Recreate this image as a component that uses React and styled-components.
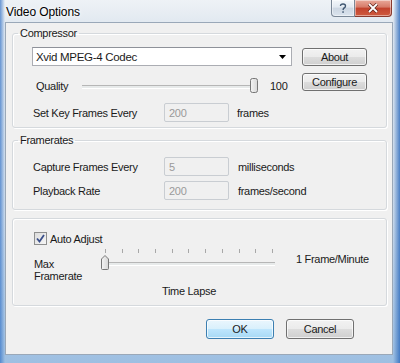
import React from "react";
import styled, { createGlobalStyle } from "styled-components";

const GlobalStyle = createGlobalStyle`
  html, body {
    margin: 0;
    padding: 0;
    width: 400px;
    height: 363px;
    overflow: hidden;
  }
`;

// Window frame
const Window = styled.div`
  width: 400px;
  height: 363px;
  display: flex;
  flex-direction: column;
  font-family: "Liberation Sans", Arial, sans-serif;
  font-size: 11px;
  letter-spacing: -0.3px;
  color: #1a1a1a;
  background:
    linear-gradient(90deg, rgba(60, 120, 200, 0.75) 0, rgba(60, 120, 200, 0) 5px, rgba(60, 120, 200, 0) 393px, rgba(50, 110, 190, 0.85) 400px),
    linear-gradient(180deg, #eef2f6 0, #e3eaf1 20px, #cddcec 60%, #9dbfe2 100%);
`;

const TitleBar = styled.div`
  height: 22px;
  display: flex;
  align-items: flex-start;
  padding-left: 6px;
`;

const Title = styled.div`
  font-size: 12px;
  letter-spacing: -0.1px;
  line-height: 14px;
  padding-top: 5px;
  color: #000;
  text-shadow: 0 0 6px #fff, 0 0 3px #fff;
`;

const CaptionButtons = styled.div`
  margin-left: auto;
  margin-right: 8px;
  display: flex;
`;

const CaptionButton = styled.div`
  width: ${(p) => (p.$close ? 37 : 24)}px;
  height: 17px;
  box-sizing: border-box;
  display: flex;
  align-items: center;
  justify-content: center;
  border: 1px solid ${(p) => (p.$close ? "#8a3a2e" : "#7a8796")};
  border-top: none;
  border-left: ${(p) => (p.$close ? "none" : "1px solid #7a8796")};
  border-radius: ${(p) => (p.$close ? "0 0 4px 0" : "0 0 0 4px")};
  background: ${(p) =>
    p.$close
      ? "linear-gradient(180deg, #e9a99a 0%, #d67a68 45%, #c2422d 50%, #cf5a3e 100%)"
      : "linear-gradient(180deg, #f4f7fa 0%, #e2e9f1 45%, #ccd6e2 50%, #dbe4ee 100%)"};
  box-shadow: inset 0 0 0 1px rgba(255, 255, 255, 0.45);
`;

const Client = styled.div`
  flex: 1;
  margin: 0 7px 8px 5px;
  background: #f0f0f0;
  border: 1px solid #9aa8b8;
  padding: 4px 5px 0 6px;
  display: flex;
  flex-direction: column;
`;

// Group boxes
const Group = styled.fieldset`
  margin: ${(p) => p.$top || 0}px 0 0 0;
  padding: 0;
  border: 1px solid #d5d9dd;
  border-radius: 3px;
  box-shadow: inset 1px 1px 0 #fff, 1px 1px 0 #fff;
  min-width: 0;
`;

const Legend = styled.legend`
  margin-left: 5px;
  padding: 0 2px;
  line-height: 13px;
  font-size: 11px;
`;

const GroupBody = styled.div`
  padding: ${(p) => p.$pad};
`;

// Common controls
const Row = styled.div`
  display: flex;
  align-items: center;
  height: ${(p) => p.$h || 19}px;
  margin-top: ${(p) => p.$mt || 0}px;
`;

const Label = styled.span`
  width: ${(p) => p.$w}px;
  margin-left: ${(p) => p.$ml || 0}px;
  flex-shrink: 0;
`;

const Unit = styled.span`
  margin-left: ${(p) => p.$ml || 8}px;
`;

const TextBox = styled.div`
  width: 65px;
  height: 19px;
  box-sizing: border-box;
  border: 1px solid #c9cdd2;
  border-radius: 2px;
  background: #f0f0f0;
  color: #9a9a9a;
  padding: 2px 0 0 4px;
  line-height: 14px;
`;

const Select = styled.div`
  width: 260px;
  height: 19px;
  box-sizing: border-box;
  border: 1px solid #abadb3;
  border-top-color: #8e9199;
  background: #fff;
  display: flex;
  align-items: center;
  padding: 0 5px 0 3px;
  font-size: 11.5px;
  letter-spacing: -0.3px;
`;

const SelectText = styled.span`
  flex: 1;
`;

const Button = styled.div`
  width: ${(p) => p.$w || 65}px;
  height: ${(p) => p.$h || 18}px;
  box-sizing: border-box;
  border: 1px solid ${(p) => (p.$focus ? "#3c7fb1" : "#707070")};
  border-radius: 3px;
  display: flex;
  align-items: center;
  justify-content: center;
  background: ${(p) =>
    p.$focus
      ? "linear-gradient(180deg, #eaf6fd 0%, #d9f0fc 49%, #bee6fd 50%, #a7d9f5 100%)"
      : "linear-gradient(180deg, #f2f2f2 0%, #ebebeb 49%, #dddddd 50%, #cfcfcf 100%)"};
  box-shadow: inset 0 0 0 1px rgba(255, 255, 255, 0.7);
`;

// Compressor layout
const Columns = styled.div`
  display: flex;
  align-items: flex-start;
`;

const LeftCol = styled.div`
  width: 260px;
  display: flex;
  flex-direction: column;
`;

const RightCol = styled.div`
  margin-left: 10px;
  margin-top: 1px;
  display: flex;
  flex-direction: column;
  gap: 7px;
`;

// Sliders
const Track = styled.div`
  position: relative;
  width: ${(p) => p.$w}px;
  height: 18px;
  flex-shrink: 0;
  margin-left: ${(p) => p.$ml || 0}px;
  &::before {
    content: "";
    position: absolute;
    left: 0;
    right: 0;
    top: 8px;
    height: 2px;
    background: #e7eaea;
    border-top: 1px solid #b6b6b6;
    border-bottom: 1px solid #fff;
  }
`;

const Thumb = styled.div`
  position: absolute;
  top: 0;
  line-height: 0;
`;

const Value = styled.span`
  margin-left: 12px;
`;

const Ticks = styled.div`
  height: 5px;
  margin: 0 5px;
  display: flex;
  justify-content: space-between;
`;

const Tick = styled.span`
  width: 1px;
  height: 4px;
  background: #a8a8a8;
`;

const CheckRow = styled.div`
  display: flex;
  align-items: center;
  height: 13px;
`;

const CheckBox = styled.div`
  width: 13px;
  height: 13px;
  box-sizing: border-box;
  border: 1px solid #8e8f8f;
  background: linear-gradient(135deg, #dcdcdc 0%, #f6f6f6 100%);
  display: flex;
  align-items: center;
  justify-content: center;
  margin-right: 3px;
`;

const SliderRow = styled.div`
  display: flex;
  align-items: flex-start;
  margin-top: 4px;
`;

const SideLabel = styled.div`
  width: 66px;
  line-height: 12px;
  margin-top: 9px;
`;

const SliderCol = styled.div`
  width: 178px;
  display: flex;
  flex-direction: column;
`;

const Caption = styled.div`
  text-align: center;
  line-height: 13px;
  margin-top: 13px;
`;

const RightLabel = styled.div`
  margin-left: 18px;
  margin-top: 4px;
  line-height: 13px;
`;

const Footer = styled.div`
  display: flex;
  justify-content: flex-end;
  gap: 12px;
  margin-top: 13px;
  padding-right: 33px;
`;

const ThumbShape = ({ pointed }) => (
  <svg width="10" height="17" viewBox="0 0 10 17">
    <defs>
      <linearGradient id={pointed ? "tg2" : "tg1"} x1="0" x2="1" y1="0" y2="0">
        <stop offset="0" stopColor="#f4f4f4" />
        <stop offset="1" stopColor="#d6d6d6" />
      </linearGradient>
    </defs>
    {pointed ? (
      <path d="M1.5 5 L5 1.5 L8.5 5 L8.5 14.5 Q8.5 15.5 7.5 15.5 L2.5 15.5 Q1.5 15.5 1.5 14.5 Z" fill="url(#tg2)" stroke="#777" />
    ) : (
      <rect x="1.5" y="1.5" width="7" height="14" rx="2" fill="url(#tg1)" stroke="#777" />
    )}
  </svg>
);

const App = () => {
  const ticks = Array.from({ length: 11 });
  return (
    <>
      <GlobalStyle />
      <Window>
        <TitleBar>
          <Title>Video Options</Title>
          <CaptionButtons>
            <CaptionButton>
              <svg width="8" height="11" viewBox="0 0 8 11">
                <path d="M1.5 3 Q1.5 1 4 1 Q6.5 1 6.5 3 Q6.5 4.5 4.5 5.5 L4 7" fill="none" stroke="#3f5670" strokeWidth="1.4" />
                <rect x="3.3" y="8.3" width="1.5" height="1.5" fill="#3f5670" />
              </svg>
            </CaptionButton>
            <CaptionButton $close>
              <svg width="12" height="10" viewBox="0 0 12 10">
                <path d="M2 1 L10 9 M10 1 L2 9" stroke="#5a2018" strokeWidth="3.2" />
                <path d="M2 1 L10 9 M10 1 L2 9" stroke="#fff" strokeWidth="1.8" />
              </svg>
            </CaptionButton>
          </CaptionButtons>
        </TitleBar>

        <Client>
          <Group>
            <Legend>Compressor</Legend>
            <GroupBody $pad="7px 0 5px 19px">
              <Columns>
                <LeftCol>
                  <Select>
                    <SelectText>Xvid MPEG-4 Codec</SelectText>
                    <svg width="7" height="4" viewBox="0 0 7 4">
                      <path d="M0 0 L7 0 L3.5 4 Z" fill="#000" />
                    </svg>
                  </Select>
                  <Row $h={18} $mt={11}>
                    <Label $w={46} $ml={4}>Quality</Label>
                    <Track $w={176}>
                      <Thumb style={{ left: 167 }}>
                        <ThumbShape />
                      </Thumb>
                    </Track>
                    <Value>100</Value>
                  </Row>
                  <Row $mt={8}>
                    <Label $w={131} $ml={1}>Set Key Frames Every</Label>
                    <TextBox>200</TextBox>
                    <Unit>frames</Unit>
                  </Row>
                </LeftCol>
                <RightCol>
                  <Button>About</Button>
                  <Button>Configure</Button>
                </RightCol>
              </Columns>
            </GroupBody>
          </Group>

          <Group $top={6}>
            <Legend>Framerates</Legend>
            <GroupBody $pad="10px 0 9px 20px">
              <Row>
                <Label $w={131}>Capture Frames Every</Label>
                <TextBox>5</TextBox>
                <Unit $ml={9}>milliseconds</Unit>
              </Row>
              <Row $mt={5}>
                <Label $w={131}>Playback Rate</Label>
                <TextBox>200</TextBox>
                <Unit $ml={9}>frames/second</Unit>
              </Row>
            </GroupBody>
          </Group>

          <Group $top={8}>
            <GroupBody $pad="13px 0 7px 21px">
              <CheckRow>
                <CheckBox>
                  <svg width="9" height="9" viewBox="0 0 9 9">
                    <path d="M1 4.5 L3.5 7.5 L8 1" fill="none" stroke="#3a4f8a" strokeWidth="1.8" />
                  </svg>
                </CheckBox>
                Auto Adjust
              </CheckRow>
              <SliderRow>
                <SideLabel>
                  Max
                  <br />
                  Framerate
                </SideLabel>
                <SliderCol>
                  <Ticks>
                    {ticks.map((_, i) => (
                      <Tick key={i} />
                    ))}
                  </Ticks>
                  <Track $w={172} $ml={3}>
                    <Thumb style={{ left: -3 }}>
                      <ThumbShape pointed />
                    </Thumb>
                  </Track>
                  <Caption>Time Lapse</Caption>
                </SliderCol>
                <RightLabel>1 Frame/Minute</RightLabel>
              </SliderRow>
            </GroupBody>
          </Group>

          <Footer>
            <Button $w={68} $h={20} $focus>OK</Button>
            <Button $w={68} $h={20}>Cancel</Button>
          </Footer>
        </Client>
      </Window>
    </>
  );
};

export default App;
